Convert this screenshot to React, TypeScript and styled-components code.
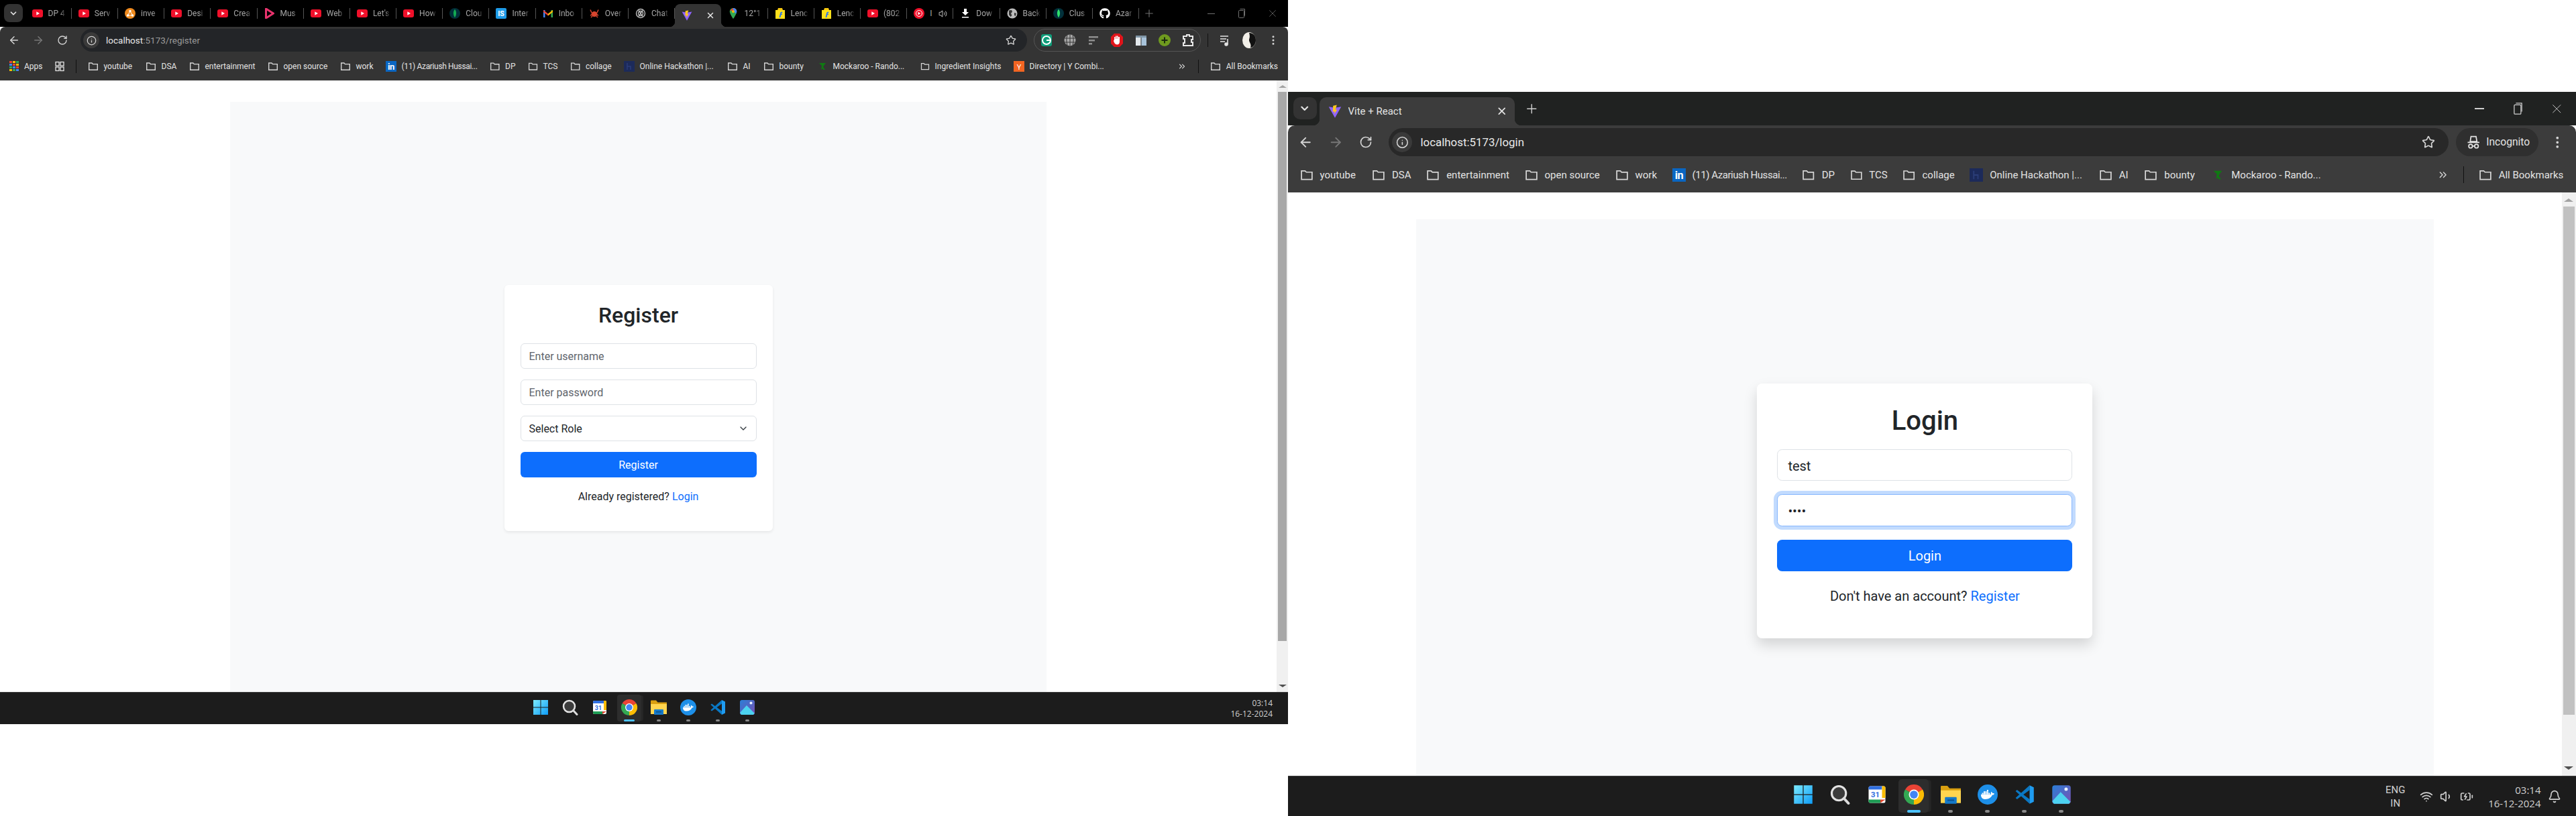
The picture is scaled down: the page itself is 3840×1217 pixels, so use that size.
import * as React from 'react';
import styled, { createGlobalStyle } from 'styled-components';
import { ArrowLeft, ArrowRight, BatteryCharging, Bell, ChevronDown, ChevronsRight, EllipsisVertical, Info, Plus, RotateCw, Star, Volume1, Volume2, Wifi, X } from 'lucide-react';
import { FaDocker, FaGithub } from 'react-icons/fa';

const fontUi = '"Roboto", "Liberation Sans", sans-serif';

const GlobalStyle = createGlobalStyle`
    html, body {
        margin: 0;
        background: #fff;
        overflow: hidden;
    }
    * {
        box-sizing: border-box;
    }
`;

const Page = styled.div`
    display: flex;
    width: 3840px;
    height: 1217px;
    font-family: ${fontUi};
`;

const Screen = styled.div<{ $incognito?: boolean }>`
    --title: ${p => (p.$incognito ? '#202221' : '#000')};
    --bar: ${p => (p.$incognito ? '#3c3c3c' : '#343434')};
    --omni: ${p => (p.$incognito ? '#282828' : '#232528')};
    --tabtext: ${p => (p.$incognito ? '#e3e3e3' : '#a6a6a6')};
    --control: ${p => (p.$incognito ? '#d0d0d0' : '#707070')};
    display: flex;
    flex-direction: column;
    flex: none;
    width: ${p => (p.$incognito ? '1536px' : '1920px')};
    height: ${p => (p.$incognito ? '864px' : '1080px')};
    zoom: ${p => (p.$incognito ? 1.25 : 1)};
    align-self: ${p => (p.$incognito ? 'flex-end' : 'flex-start')};
`;

const TitleBar = styled.div`
    display: flex;
    align-items: flex-end;
    flex: none;
    height: 40px;
    background: var(--title);
`;

const TabSearch = styled.div`
    display: flex;
    align-items: center;
    justify-content: center;
    flex: none;
    width: 28px;
    height: 27px;
    margin: 0 3.6px 7px 6px;
    border-radius: 8px;
    background: #333;
    color: #e3e3e3;
`;

const Tab = styled.div<{ $active?: boolean; $width: number }>`
    position: relative;
    display: flex;
    align-items: center;
    flex: none;
    gap: 8px;
    width: ${p => p.$width}px;
    height: 34px;
    padding: 0 9px 6px 10px;
    color: var(--tabtext);
    font-size: 12px;
    ${p => p.$active && `
        background: var(--bar);
        border-radius: 8px 8px 0 0;
        color: #e3e3e3;
        padding-top: 6px;
        padding-bottom: 6px;
        &::before, &::after {
            content: '';
            position: absolute;
            bottom: 0;
            width: 8px;
            height: 8px;
        }
        &::before {
            left: -8px;
            background: radial-gradient(circle at 0 0, transparent 8px, var(--bar) 8.5px);
        }
        &::after {
            right: -8px;
            background: radial-gradient(circle at 100% 0, transparent 8px, var(--bar) 8.5px);
        }
    `}
    ${p => !p.$active && `
        &::after {
            content: '';
            position: absolute;
            right: 0;
            top: 6px;
            width: 1px;
            height: 16px;
            background: #555;
        }
    `}
`;

const TabTitle = styled.span<{ $fade?: boolean }>`
    flex: 1;
    min-width: 0;
    overflow: hidden;
    white-space: nowrap;
    ${p => p.$fade && `
        -webkit-mask-image: linear-gradient(90deg, #000 70%, transparent);
        mask-image: linear-gradient(90deg, #000 70%, transparent);
    `}
`;

const NewTab = styled.div<{ $gap: number }>`
    display: flex;
    align-items: center;
    justify-content: center;
    width: 28px;
    height: 28px;
    margin: 0 0 6px ${p => p.$gap}px;
    color: var(--control);
`;

const WindowControls = styled.div`
    display: flex;
    align-items: center;
    height: 100%;
    margin-left: auto;
    color: var(--control);
    font-size: 0;
`;

const WindowButton = styled.div`
    display: flex;
    align-items: center;
    justify-content: center;
    width: 46px;
    height: 100%;
`;

const MinLine = styled.div`
    width: 11px;
    height: 1px;
    background: var(--control);
`;

const Toolbar = styled.div`
    display: flex;
    align-items: center;
    flex: none;
    height: 42px;
    padding: 0 4px 2px 3px;
    background: var(--bar);
    border-radius: 8px 8px 0 0;
`;

const ToolButton = styled.div<{ $dim?: boolean }>`
    display: flex;
    align-items: center;
    justify-content: center;
    flex: none;
    width: 36px;
    height: 34px;
    color: ${p => (p.$dim ? '#777' : '#d5d5d5')};
`;

const Omnibox = styled.div`
    display: flex;
    align-items: center;
    flex: 1;
    height: 34px;
    margin-left: 9px;
    padding: 0 16px 0 4px;
    border-radius: 17px;
    background: var(--omni);
    color: #d5d5d5;
`;

const InfoChip = styled.div`
    display: flex;
    align-items: center;
    justify-content: center;
    width: 24px;
    height: 24px;
    margin-right: 10px;
    border-radius: 50%;
    background: #3a3a3a;
`;

const Url = styled.div`
    flex: 1;
    color: #e8e8e8;
    font-size: 13.5px;
`;

const UrlDim = styled.span`
    color: #9a9a9a;
`;

const ExtensionPill = styled.div`
    display: flex;
    align-items: center;
    flex: none;
    justify-content: space-between;
    width: 249px;
    height: 34px;
    margin-left: 10px;
    padding: 0 8px;
    border: 1px solid #555;
    border-radius: 17px;
`;

const ToolSep = styled.div`
    flex: none;
    width: 1px;
    height: 20px;
    margin: 0 7px 0 10px;
    background: #111;
`;

const IncognitoPill = styled.div`
    display: flex;
    align-items: center;
    flex: none;
    gap: 6px;
    width: 98px;
    height: 34px;
    margin: 0 5px 0 9px;
    padding-left: 12px;
    border-radius: 17px;
    background: #2f2f2f;
    color: #e3e3e3;
    font-size: 12.5px;
`;

const Bookmarks = styled.div`
    display: flex;
    align-items: center;
    flex: none;
    gap: 18px;
    height: 38px;
    padding: 0 15px 4px 14px;
    background: var(--bar);
    color: #e3e3e3;
    font-size: 12px;
`;

const Bookmark = styled.div<{ $width?: number; $squeeze?: boolean }>`
    display: flex;
    align-items: center;
    flex: none;
    gap: 8px;
    white-space: nowrap;
    ${p => p.$width && `width: ${p.$width}px;`}
    ${p => p.$squeeze && 'letter-spacing: -0.35px;'}
`;

const BookmarkSep = styled.div`
    flex: none;
    width: 1px;
    height: 20px;
    margin: 0 -1px;
    background: #111;
`;

const Overflow = styled.div`
    display: flex;
    align-items: center;
    margin-left: auto;
    color: #d5d5d5;
`;

const Content = styled.div`
    display: flex;
    flex: 1;
    min-height: 0;
    background: #fff;
`;

const Viewport = styled.div`
    flex: 1;
    min-width: 0;
    overflow: hidden;
`;

const Panel = styled.div<{ $width: number; $height: number; $top: number }>`
    display: flex;
    align-items: center;
    justify-content: center;
    width: ${p => p.$width}px;
    height: ${p => p.$height}px;
    margin: ${p => p.$top}px auto 0;
    background: #f8f9fa;
`;

const Card = styled.div<{ $strong?: boolean }>`
    width: 400px;
    padding: 24px;
    border-radius: 6px;
    background: #fff;
    color: #212529;
    box-shadow: ${p => (p.$strong ? '0 8px 16px rgba(0, 0, 0, 0.15)' : '0 2px 4px rgba(0, 0, 0, 0.075)')};
`;

const Heading = styled.h2<{ $tight?: boolean }>`
    margin: 0 0 ${p => (p.$tight ? 14 : 22)}px;
    padding-top: 2px;
    font-size: 32px;
    font-weight: 500;
    line-height: 1.2;
    text-align: center;
`;

const Field = styled.input<{ $focus?: boolean }>`
    display: block;
    width: 100%;
    height: 38px;
    margin-bottom: 16px;
    padding: 7px 12px 5px;
    border: 1px solid ${p => (p.$focus ? '#86b7fe' : '#dee2e6')};
    border-radius: 6px;
    outline: none;
    background: #fff;
    color: #212529;
    font-family: ${fontUi};
    font-size: 16px;
    box-shadow: ${p => (p.$focus ? '0 0 0 4px rgba(13, 110, 253, 0.25)' : 'none')};
    &::placeholder {
        color: #5f666d;
        opacity: 1;
    }
`;

const SelectWrap = styled.div`
    position: relative;
    margin-bottom: 16px;
    svg {
        position: absolute;
        right: 12px;
        top: 11px;
        color: #343a40;
        pointer-events: none;
    }
`;

const Select = styled.select`
    display: block;
    width: 100%;
    height: 38px;
    padding: 7px 12px 5px;
    border: 1px solid #dee2e6;
    border-radius: 6px;
    outline: none;
    background: #fff;
    color: #212529;
    font-family: ${fontUi};
    font-size: 16px;
    appearance: none;
`;

const Submit = styled.button`
    display: block;
    width: 100%;
    height: 38px;
    padding-top: 2px;
    border: 0;
    border-radius: 6px;
    background: #0d6efd;
    color: #fff;
    font-family: ${fontUi};
    font-size: 16px;
`;

const Foot = styled.p`
    margin: 16px 0 15px;
    padding-top: 1px;
    font-size: 16px;
    line-height: 24px;
    text-align: center;
`;

const FootLink = styled.a`
    color: #0d6efd;
`;

const Scrollbar = styled.div<{ $width: number }>`
    display: flex;
    flex-direction: column;
    align-items: center;
    flex: none;
    width: ${p => p.$width}px;
    background: #f0f0f0;
`;

const ScrollArrow = styled.div<{ $down?: boolean }>`
    flex: none;
    width: 0;
    height: 0;
    margin: ${p => (p.$down ? 'auto 0 7px' : '7px 0 6px')};
    border-left: 6px solid transparent;
    border-right: 6px solid transparent;
    ${p => (p.$down ? 'border-top: 4px solid #505050;' : 'border-bottom: 4px solid #a3a3a3;')}
`;

const ScrollThumb = styled.div<{ $height: number; $color: string }>`
    flex: none;
    width: calc(100% - 4px);
    height: ${p => p.$height}px;
    background: ${p => p.$color};
`;

const Taskbar = styled.div`
    display: grid;
    grid-template-columns: 1fr auto 1fr;
    align-items: center;
    flex: none;
    height: 48px;
    border-top: 1px solid #3d3d3d;
    background: #1c1c1c;
    color: #d0d0d0;
`;

const TaskIcons = styled.div`
    display: flex;
    grid-column: 2;
    align-items: center;
    height: 100%;
`;

const TaskIcon = styled.div<{ $state?: 'open' | 'active' }>`
    position: relative;
    display: flex;
    align-items: center;
    justify-content: center;
    width: 44px;
    height: 100%;
    padding-bottom: 4px;
    ${p => p.$state === 'active' && `
        &::before {
            content: '';
            position: absolute;
            z-index: 0;
            top: 3px;
            left: 4px;
            width: 36px;
            height: 40px;
            border-radius: 4px;
            background: #2d2d2d;
            box-shadow: 4px 0 0 -1px #262626;
        }
        & > svg {
            position: relative;
        }
    `}
    ${p => p.$state && `
        &::after {
            content: '';
            position: absolute;
            bottom: 4px;
            left: 50%;
            width: ${p.$state === 'active' ? 16 : 6}px;
            height: 3px;
            margin-left: ${p.$state === 'active' ? -8 : -3}px;
            border-radius: 2px;
            background: ${p.$state === 'active' ? '#4cc2ff' : '#8a8a8a'};
        }
    `}
`;

const Tray = styled.div`
    display: flex;
    grid-column: 3;
    align-items: center;
    justify-content: flex-end;
    padding-right: 23px;
`;

const TrayTight = styled(Tray)`
    padding-right: 18px;
`;

const Lang = styled.div`
    margin-right: 17px;
    font-size: 12px;
    line-height: 16px;
    text-align: center;
`;

const TrayIcons = styled.div`
    display: flex;
    gap: 8px;
    margin-right: 18px;
`;

const Clock = styled.div`
    font-family: "Open Sans", sans-serif;
    font-size: 12px;
    line-height: 16px;
    text-align: right;
`;

const BellWrap = styled.div`
    display: flex;
    margin-left: 8px;
`;

const FolderIcon = ({ size = 16 }: { size?: number }) => (
    <svg width={size} height={size} viewBox="0 0 16 16" fill="none" stroke="#d5d5d5" strokeWidth="1.4">
        <path d="M1.7 3h4.2l1.5 1.6h6.9v8.7H1.7z" />
    </svg>
);

const Fav = ({ kind }: { kind: string }) => {
    const box = { width: 16, height: 16, viewBox: '0 0 16 16', style: { flex: 'none' } };
    switch (kind) {
        case 'yt':
            return (
                <svg {...box}>
                    <rect x="0" y="2" width="16" height="12" rx="3" fill="#f0102a" />
                    <path d="M6.3 5.2 11 8l-4.7 2.8z" fill="#fff" />
                </svg>
            );
        case 'ring':
            return (
                <svg {...box}>
                    <circle cx="8" cy="8" r="8" fill="#f08a1d" />
                    <circle cx="8" cy="4.5" r="1.7" fill="#fff" />
                    <circle cx="4.5" cy="11" r="1.7" fill="#fff" />
                    <circle cx="11.5" cy="11" r="1.7" fill="#fff" />
                    <path d="M8 4.5 4.5 11h7z" fill="none" stroke="#fff" />
                </svg>
            );
        case 'music':
            return (
                <svg {...box}>
                    <path d="M2.5 1 13.5 8 2.5 15z" fill="none" stroke="#e8336d" strokeWidth="3" strokeLinejoin="round" />
                </svg>
            );
        case 'mongo':
            return (
                <svg {...box}>
                    <circle cx="8" cy="8" r="8" fill="#02303a" />
                    <path d="M8 1.8C10.6 5 11 9.5 8 14.2 5 9.5 5.4 5 8 1.8z" fill="#13aa52" />
                </svg>
            );
        case 'is':
            return (
                <svg {...box}>
                    <rect width="16" height="16" rx="2" fill="#1e9be8" />
                    <text x="8" y="12" fill="#fff" fontSize="10.5" fontWeight="700" textAnchor="middle" fontFamily="Roboto">IS</text>
                </svg>
            );
        case 'gmail':
            return (
                <svg {...box}>
                    <path d="M1 14V3l2.500 0V14z" fill="#4285f4" />
                    <path d="M12.500 14V3H15V14z" fill="#34a853" />
                    <path d="M1 3 8 8.600 8 11.500 1 6z" fill="#ea4335" />
                    <path d="M15 3 8 8.600 8 11.500 15 6z" fill="#fbbc04" />
                </svg>
            );
        case 'crab':
            return (
                <svg {...box}>
                    <ellipse cx="8" cy="9" rx="4.500" ry="4" fill="#d8452e" />
                    <path d="M2 2.500 4 7M14 2.500 12 7M2 11l2-1M14 11l-2-1M3 14l2-2M13 14l-2-2" stroke="#d8452e" strokeWidth="1.500" />
                </svg>
            );
        case 'chat':
            return (
                <svg {...box} fill="none" stroke="#bdbdbd" strokeWidth="1.400">
                    <circle cx="8" cy="8" r="6.500" />
                    <circle cx="8" cy="8" r="3.500" />
                    <path d="M5 3.500 11 12.500M11 3.500 5 12.500" />
                </svg>
            );
        case 'vite':
            return (
                <svg {...box}>
                    <path d="M.6 2.500 8 3.800l7.400-1.300L8 15.700z" fill="#8f63ff" />
                    <path d="M10.200.4 5.800 1.300l-.4 7.300 2.200-.5-.5 3.300 3.600-5.700-2.100.4z" fill="#ffc81e" />
                </svg>
            );
        case 'maps':
            return (
                <svg {...box}>
                    <path d="M8 0C4.800 0 2.800 2.400 2.800 5.200 2.800 9 8 16 8 16s5.200-7 5.200-10.800C13.200 2.400 11.200 0 8 0z" fill="#34a853" />
                    <path d="M3 3.400 8 0c3.200 0 5.200 2.400 5.200 5.200L3 3.400z" fill="#ea4335" />
                    <path d="M8 0c3.200 0 5.200 2.400 5.200 5.200-.1 1-.4 2-.9 3L8 5.200z" fill="#4285f4" />
                    <circle cx="8" cy="5.200" r="1.900" fill="#fbbc04" />
                </svg>
            );
        case 'flip':
            return (
                <svg {...box}>
                    <path d="M1 3h14v13H1z" fill="#ffe11b" />
                    <path d="M4 3 5 0h6l1 3z" fill="#f5c60e" />
                    <path d="M6.500 14 8 7.500c.3-1.300 1.300-1.800 3.500-1.600L11 7.500H9.800l-.3 1.200h1.700l-.4 1.500H9.200L8.400 14z" fill="#2874f0" />
                </svg>
            );
        case 'ytm':
            return (
                <svg {...box}>
                    <circle cx="8" cy="8" r="8" fill="#f0102a" />
                    <circle cx="8" cy="8" r="4.500" fill="none" stroke="#fff" />
                    <path d="M6.500 5.800 10.200 8l-3.700 2.200z" fill="#fff" />
                </svg>
            );
        case 'down':
            return (
                <svg {...box}>
                    <path d="M6 1h4v5h3L8 11 3 6h3zM3 13h10v1.600H3z" fill="#fff" />
                </svg>
            );
        case 'globe':
            return (
                <svg {...box}>
                    <circle cx="8" cy="8" r="7.500" fill="#bdbdbd" />
                    <path d="M3 3.500 7 3 8 5.500 6 8 7.500 11 5.500 13 3 10zM11 7l3 1-1.500 4.500-1.500-2z" fill="#343434" />
                </svg>
            );
        case 'leaf':
            return (
                <svg {...box}>
                    <circle cx="8" cy="8" r="8" fill="#02303a" />
                    <path d="M8 1.800C10.600 5 11 9.500 8 14.200 5 9.500 5.400 5 8 1.800z" fill="#2ee06b" />
                </svg>
            );
        case 'git':
            return <FaGithub size={16} color="#fff" style={{ flex: 'none' }} />;
        case 'in':
            return (
                <svg {...box}>
                    <rect width="16" height="16" fill="#0a66c2" />
                    <text x="8" y="13" fill="#fff" fontSize="13" fontWeight="700" textAnchor="middle" fontFamily="Roboto">in</text>
                </svg>
            );
        case 'hack':
            return (
                <svg {...box}>
                    <rect width="16" height="16" fill="#1c2a5a" />
                    <path d="M5 3v10M5 8h5v5" stroke="#2b3d78" strokeWidth="1.500" fill="none" />
                </svg>
            );
        case 'roo':
            return (
                <svg {...box}>
                    <path d="M3 3h10L10 7 9 9l3 4H9L8 11l-2 2 1-6z" fill="#0f7a12" />
                </svg>
            );
        case 'yc':
            return (
                <svg {...box}>
                    <rect width="16" height="16" fill="#f26522" />
                    <text x="8" y="12.500" fill="#fff" fontSize="11" textAnchor="middle" fontFamily="Roboto">Y</text>
                </svg>
            );
        default:
            return <FolderIcon />;
    }
};

const AppsIcon = () => (
    <svg width="14" height="16" viewBox="0 0 14 16">
        {['#ea4335', '#fbbc04', '#34a853', '#4285f4', '#ea4335', '#fbbc04', '#34a853', '#4285f4', '#ea4335', '#fbbc04', '#34a853', '#4285f4'].map((c, i) => (
            <rect key={i} x={(i % 3) * 5} y={Math.floor(i / 3) * 4} width="4" height="3" fill={c} />
        ))}
    </svg>
);

const GroupsIcon = () => (
    <svg width="14" height="16" viewBox="0 0 14 16" fill="none" stroke="#e3e3e3" strokeWidth="1.300">
        <rect x="1" y="1.500" width="5" height="5.500" />
        <rect x="8" y="1.500" width="5" height="5.500" />
        <rect x="1" y="9" width="5" height="5.500" />
        <rect x="8" y="9" width="5" height="5.500" />
    </svg>
);

const MaximizeIcon = () => (
    <svg width="12" height="16" viewBox="0 0 12 16" fill="none" stroke="currentColor">
        <rect x="1.500" y="3.500" width="8" height="11" rx="1" />
        <path d="M3.500 1.500h7v10" />
    </svg>
);

const HatIcon = () => (
    <svg width="18" height="18" viewBox="0 0 18 18" fill="none" stroke="#e3e3e3" strokeWidth="1.400">
        <path d="M6 2h6l1 6H5zM2 9h14" />
        <circle cx="5.500" cy="13.500" r="2.200" />
        <circle cx="12.500" cy="13.500" r="2.200" />
        <path d="M7.700 13.500h2.600" />
    </svg>
);

const ExtIcon = ({ kind }: { kind: string }) => {
    const box = { width: 20, height: 20, viewBox: '0 0 20 20' };
    switch (kind) {
        case 'g':
            return (
                <svg {...box}>
                    <rect x="2" y="1" width="16" height="18" rx="3" fill="#0f9d7a" />
                    <circle cx="10" cy="10" r="6" fill="none" stroke="#fff" strokeWidth="2" />
                    <path d="M10 10h6" stroke="#fff" strokeWidth="2" />
                </svg>
            );
        case 'globe':
            return (
                <svg {...box} fill="none" stroke="#343434" strokeWidth="1">
                    <circle cx="10" cy="10" r="8.500" fill="#a9a9a9" stroke="none" />
                    <path d="M2 7h16M2 13h16M10 1.500v17M6 2.500c-1.500 4-1.500 11 0 15M14 2.500c1.500 4 1.500 11 0 15" />
                </svg>
            );
        case 'bars':
            return (
                <svg {...box} fill="#8f8f8f">
                    <rect x="3" y="4" width="14" height="2.500" />
                    <rect x="3" y="9" width="9" height="2.500" />
                    <rect x="3" y="14" width="5" height="2.500" />
                </svg>
            );
        case 'stop':
            return (
                <svg {...box}>
                    <path d="M6 0h8l5 5v10l-5 5H6l-5-5V5z" fill="#e0141a" />
                    <path d="M6 9V5h1.500v3H8V3.500h1.500V8h.5V3.500h1.500V8h.5V5H14v7c0 3-1.500 4.500-4 4.500S6 14 5 11z" fill="#fff" />
                </svg>
            );
        case 'book':
            return (
                <svg {...box}>
                    <rect x="2" y="3" width="7.500" height="15" fill="#e3e8ec" />
                    <rect x="10.500" y="3" width="7.500" height="15" fill="#a8c3da" />
                    <rect x="2" y="3" width="16" height="3" fill="#7f95a6" />
                </svg>
            );
        case 'plus':
            return (
                <svg {...box}>
                    <circle cx="10" cy="10" r="9" fill="#6f9a1f" />
                    <path d="M10 5.500v9M5.500 10h9" stroke="#1c2a10" strokeWidth="2" />
                </svg>
            );
        case 'puzzle':
            return (
                <svg {...box} fill="none" stroke="#e8e8e8" strokeWidth="2">
                    <path d="M3 4h5V2h4v2h5v5h-2v4h2v5H3v-4h2V8H3z" />
                </svg>
            );
        case 'media':
            return (
                <svg {...box} fill="none" stroke="#e3e3e3" strokeWidth="1.600">
                    <path d="M3 4h12M3 8h9M3 12h7M14 8v8" />
                    <circle cx="12" cy="16" r="2" fill="#e3e3e3" />
                </svg>
            );
        default:
            return (
                <svg width="24" height="24" viewBox="0 0 24 24">
                    <ellipse cx="12" cy="12" rx="10" ry="12" fill="#f2efe8" />
                    <path d="M12 1c7 0 10 5 10 11s-4 11-8 11c2-5-2-8-2-11s2-4 0-11z" fill="#111" />
                </svg>
            );
    }
};

const TaskGlyph = ({ kind }: { kind: string }) => {
    const box = { width: 24, height: 24, viewBox: '0 0 24 24' };
    switch (kind) {
        case 'win':
            return (
                <svg {...box}>
                    <defs>
                        <linearGradient id="winA" x1="0" y1="0" x2="1" y2="1">
                            <stop offset="0" stopColor="#7cebff" />
                            <stop offset="1" stopColor="#0e9cf6" />
                        </linearGradient>
                    </defs>
                    <path d="M1 1h10.500v10.500H1zM12.500 1H23v10.500H12.500zM1 12.500h10.500V23H1zM12.500 12.500H23V23H12.500z" fill="url(#winA)" />
                </svg>
            );
        case 'search':
            return (
                <svg {...box}>
                    <circle cx="10.500" cy="10.500" r="8.500" fill="#3c3c3c" stroke="#e3e3e3" strokeWidth="2.500" />
                    <path d="M16.500 16.500 22 22.500" stroke="#dcdcdc" strokeWidth="3" strokeLinecap="round" />
                </svg>
            );
        case 'cal':
            return (
                <svg {...box}>
                    <rect x="2" y="2" width="20" height="20" rx="2" fill="#fff" />
                    <path d="M2 4a2 2 0 0 1 2-2h14v4H2z" fill="#2f6fe0" />
                    <path d="M2 18h14v4H4a2 2 0 0 1-2-2z" fill="#1f9d55" />
                    <path d="M18 2h2a2 2 0 0 1 2 2v12h-4z" fill="#fbbc04" />
                    <path d="M16 22v-4h6z" fill="#e2452f" />
                    <text x="10" y="15.500" fill="#2f6fe0" fontSize="9" fontWeight="700" textAnchor="middle" fontFamily="Roboto">31</text>
                </svg>
            );
        case 'chrome':
            return (
                <svg {...box}>
                    <path d="M12 12 1.600 6A12 12 0 0 1 22.400 6z" fill="#ea4335" />
                    <path d="M12 12 22.400 6A12 12 0 0 1 12 24z" fill="#fbbc04" />
                    <path d="M12 12 12 24A12 12 0 0 1 1.600 6z" fill="#34a853" />
                    <circle cx="12" cy="12" r="6" fill="#fff" />
                    <circle cx="12" cy="12" r="4.700" fill="#4285f4" />
                </svg>
            );
        case 'folder':
            return (
                <svg {...box}>
                    <path d="M0 2.500a1 1 0 0 1 1-1h7l2.500 3H24V22H0z" fill="#d99f10" />
                    <path d="M0 7h24v15H0z" fill="#ffd54f" />
                    <rect x="5" y="15" width="14" height="8" rx="1" fill="#1579c9" />
                    <rect x="8" y="18" width="8" height="1.500" fill="#0a4f8a" />
                </svg>
            );
        case 'docker':
            return (
                <svg {...box}>
                    <circle cx="12" cy="12" r="12" fill="#1d8fe8" />
                    <foreignObject x="4" y="4" width="16" height="16">
                        <FaDocker size={16} color="#fff" />
                    </foreignObject>
                </svg>
            );
        case 'code':
            return (
                <svg {...box}>
                    <path d="M18 1v5.500L3 17.600 1.300 16z" fill="#0a78c4" />
                    <path d="M1.300 8 3 6.400l15 11.100V23z" fill="#0a78c4" />
                    <path d="M18 1l5 2.400v17.200L18 23z" fill="#1f9cf0" />
                </svg>
            );
        default:
            return (
                <svg {...box}>
                    <defs>
                        <linearGradient id="photoA" x1="0" y1="0" x2="1" y2="1">
                            <stop offset="0" stopColor="#2a7fd8" />
                            <stop offset="1" stopColor="#7a4fb0" />
                        </linearGradient>
                    </defs>
                    <rect x="1" y="1" width="22" height="22" rx="3" fill="url(#photoA)" />
                    <circle cx="17.500" cy="5.500" r="2" fill="#e9f2ff" />
                    <path d="M1 20 11 9l12 12v-1l-2 3H3z" fill="#4cd2f0" />
                </svg>
            );
    }
};

const RegisterTabs = [
    ['yt', 'DP 4'], ['yt', 'Serv'], ['ring', 'inve'], ['yt', 'Desi'], ['yt', 'Crea'], ['music', 'Mus'], ['yt', 'Web'],
    ['yt', "Let's"], ['yt', 'How'], ['mongo', 'Clou'], ['is', 'Inter'], ['gmail', 'Inbo'], ['crab', 'Over'], ['chat', 'Chat'],
];

const RegisterTabsAfter = [
    ['maps', '12°1'], ['flip', 'Lenc'], ['flip', 'Lenc'], ['yt', '(802'], ['ytm', 'I'], ['down', 'Dow'], ['globe', 'Back'],
    ['leaf', 'Clus'], ['git', 'Azar'],
];

interface BookmarkItem {
    kind: string;
    label: string;
    width?: number;
    squeeze?: boolean;
}

const sharedBookmarks: BookmarkItem[] = [
    { kind: 'folder', label: 'youtube', width: 68 },
    { kind: 'folder', label: 'DSA', width: 47 },
    { kind: 'folder', label: 'entertainment', width: 99 },
    { kind: 'folder', label: 'open source', width: 90 },
    { kind: 'folder', label: 'work', width: 50 },
    { kind: 'in', label: '(11) Azariush Hussai...', width: 137, squeeze: true },
    { kind: 'folder', label: 'DP', width: 39 },
    { kind: 'folder', label: 'TCS', width: 45 },
    { kind: 'folder', label: 'collage', width: 62 },
    { kind: 'hack', label: 'Online Hackathon |...', width: 136 },
    { kind: 'folder', label: 'AI', width: 36 },
    { kind: 'folder', label: 'bounty', width: 62 },
    { kind: 'roo', label: 'Mockaroo - Rando...', width: 136 },
];

const Bar = ({ items }: { items: BookmarkItem[] }) => (
    <>
        {items.map((item, index) => (
            <Bookmark key={index} $width={item.width} $squeeze={item.squeeze}>
                <Fav kind={item.kind} />
                {item.label}
            </Bookmark>
        ))}
    </>
);

const ScrollTrack = ({ width, height, color }: { width: number; height: number; color: string }) => (
    <Scrollbar $width={width}>
        <ScrollArrow />
        <ScrollThumb $height={height} $color={color} />
        <ScrollArrow $down />
    </Scrollbar>
);

const Apps = () => (
    <TaskIcons>
        <TaskIcon><TaskGlyph kind="win" /></TaskIcon>
        <TaskIcon><TaskGlyph kind="search" /></TaskIcon>
        <TaskIcon><TaskGlyph kind="cal" /></TaskIcon>
        <TaskIcon $state="active"><TaskGlyph kind="chrome" /></TaskIcon>
        <TaskIcon $state="open"><TaskGlyph kind="folder" /></TaskIcon>
        <TaskIcon $state="open"><TaskGlyph kind="docker" /></TaskIcon>
        <TaskIcon $state="open"><TaskGlyph kind="code" /></TaskIcon>
        <TaskIcon $state="open"><TaskGlyph kind="photos" /></TaskIcon>
    </TaskIcons>
);

const Controls = () => (
    <WindowControls>
        <WindowButton><MinLine /></WindowButton>
        <WindowButton><MaximizeIcon /></WindowButton>
        <WindowButton><X size={18} strokeWidth={1} /></WindowButton>
    </WindowControls>
);

const NavButtons = () => (
    <>
        <ToolButton><ArrowLeft size={18} /></ToolButton>
        <ToolButton $dim><ArrowRight size={18} /></ToolButton>
        <ToolButton><RotateCw size={16} /></ToolButton>
    </>
);

const RegisterWindow = () => (
    <Screen>
        <TitleBar>
            <TabSearch><ChevronDown size={14} strokeWidth={3} /></TabSearch>
            {RegisterTabs.map(([kind, title], index) => (
                <Tab key={index} $width={69.2}>
                    <Fav kind={kind} />
                    <TabTitle $fade>{title}</TabTitle>
                </Tab>
            ))}
            <Tab $active $width={69.2}>
                <Fav kind="vite" />
                <TabTitle />
                <X size={14} strokeWidth={2.5} />
            </Tab>
            {RegisterTabsAfter.map(([kind, title], index) => (
                <Tab key={index} $width={69.2}>
                    <Fav kind={kind} />
                    <TabTitle $fade={kind !== 'ytm'}>{title}</TabTitle>
                    {kind === 'ytm' && <Volume2 size={13} />}
                </Tab>
            ))}
            <NewTab $gap={1}><Plus size={18} strokeWidth={1.5} /></NewTab>
            <Controls />
        </TitleBar>
        <Toolbar>
            <NavButtons />
            <Omnibox>
                <InfoChip><Info size={15} /></InfoChip>
                <Url>localhost<UrlDim>:5173/register</UrlDim></Url>
                <Star size={16} />
            </Omnibox>
            <ExtensionPill>
                {['g', 'globe', 'bars', 'stop', 'book', 'plus', 'puzzle'].map(kind => <ExtIcon key={kind} kind={kind} />)}
            </ExtensionPill>
            <ToolSep />
            <ToolButton><ExtIcon kind="media" /></ToolButton>
            <ToolButton><ExtIcon kind="profile" /></ToolButton>
            <ToolButton><EllipsisVertical size={18} /></ToolButton>
        </Toolbar>
        <Bookmarks>
            <Bookmark><AppsIcon />Apps</Bookmark>
            <Bookmark><GroupsIcon /></Bookmark>
            <BookmarkSep />
            <Bar items={sharedBookmarks} />
            <Bar items={[{ kind: 'folder', label: 'Ingredient Insights', width: 121 }, { kind: 'yc', label: 'Directory | Y Combi...' }]} />
            <Overflow><ChevronsRight size={14} /></Overflow>
            <BookmarkSep />
            <Bar items={[{ kind: 'folder', label: 'All Bookmarks' }]} />
        </Bookmarks>
        <Content>
            <Viewport>
                <Panel $width={1217} $height={913} $top={32}>
                    <Card>
                        <Heading>Register</Heading>
                        <Field placeholder="Enter username" />
                        <Field placeholder="Enter password" type="password" />
                        <SelectWrap>
                            <Select defaultValue="">
                                <option value="">Select Role</option>
                                <option value="user">User</option>
                                <option value="admin">Admin</option>
                            </Select>
                            <ChevronDown size={16} />
                        </SelectWrap>
                        <Submit>Register</Submit>
                        <Foot>Already registered? <FootLink>Login</FootLink></Foot>
                    </Card>
                </Panel>
            </Viewport>
            <ScrollTrack width={17} height={819} color="#a8a8a8" />
        </Content>
        <Taskbar>
            <Apps />
            <Tray>
                <Clock>03:14<br />16-12-2024</Clock>
            </Tray>
        </Taskbar>
    </Screen>
);

const LoginWindow = () => (
    <Screen $incognito>
        <TitleBar>
            <TabSearch><ChevronDown size={14} strokeWidth={3} /></TabSearch>
            <Tab $active $width={233}>
                <Fav kind="vite" />
                <TabTitle>Vite + React</TabTitle>
                <X size={14} strokeWidth={2.5} />
            </Tab>
            <NewTab $gap={6}><Plus size={18} strokeWidth={1.5} /></NewTab>
            <Controls />
        </TitleBar>
        <Toolbar>
            <NavButtons />
            <Omnibox>
                <InfoChip><Info size={15} /></InfoChip>
                <Url>localhost:5173/login</Url>
                <Star size={16} />
            </Omnibox>
            <IncognitoPill><HatIcon />Incognito</IncognitoPill>
            <ToolButton><EllipsisVertical size={18} /></ToolButton>
        </Toolbar>
        <Bookmarks>
            <Bar items={sharedBookmarks} />
            <Overflow><ChevronsRight size={14} /></Overflow>
            <BookmarkSep />
            <Bar items={[{ kind: 'folder', label: 'All Bookmarks' }]} />
        </Bookmarks>
        <Content>
            <Viewport>
                <Panel $width={1214} $height={696} $top={32}>
                    <Card $strong>
                        <Heading $tight>Login</Heading>
                        <Field defaultValue="test" />
                        <Field $focus type="password" defaultValue="test" />
                        <Submit>Login</Submit>
                        <Foot>Don't have an account? <FootLink>Register</FootLink></Foot>
                    </Card>
                </Panel>
            </Viewport>
            <ScrollTrack width={17} height={606} color="#c1c1c1" />
        </Content>
        <Taskbar>
            <Apps />
            <TrayTight>
                <Lang>ENG<br />IN</Lang>
                <TrayIcons>
                    <Wifi size={16} />
                    <Volume1 size={16} />
                    <BatteryCharging size={16} />
                </TrayIcons>
                <Clock>03:14<br />16-12-2024</Clock>
                <BellWrap><Bell size={16} /></BellWrap>
            </TrayTight>
        </Taskbar>
    </Screen>
);

export default function App() {
    return (
        <Page>
            <GlobalStyle />
            <RegisterWindow />
            <LoginWindow />
        </Page>
    );
}
